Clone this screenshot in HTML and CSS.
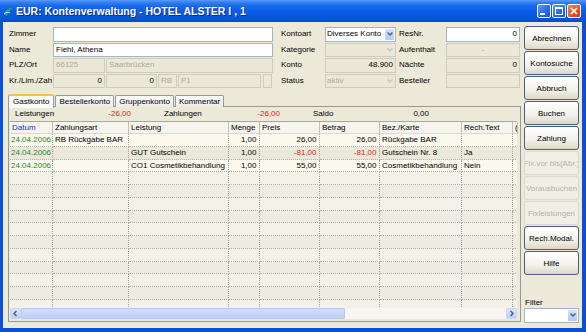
FILE: index.html
```html
<!DOCTYPE html>
<html lang="de">
<head>
  <meta charset="UTF-8" />
  <title>Kontenverwaltung</title>
  <link rel="stylesheet" href="styles.css">
</head>
<body>
<div class="window">
  <div class="titlebar">
    <svg class="app-icon" width="11" height="11" viewBox="0 0 11 11">
      <path d="M1 8 C3 3, 6 2, 10 2 C7 4, 5 6, 4 10 Z" fill="#2fa36b"/>
      <path d="M1 8 C3 6, 5 6, 7 7" stroke="#cdeffd" stroke-width="1" fill="none"/>
    </svg>
    <span class="title">EUR: Kontenverwaltung - HOTEL ALSTER I , 1</span>
    <div class="caption-btns">
      <span class="cap"><svg width="14" height="14" viewBox="0 0 14 14"><rect x="3" y="9" width="5" height="2" fill="#fff"/></svg></span>
      <span class="cap"><svg width="14" height="14" viewBox="0 0 14 14"><rect x="3.5" y="3.5" width="7" height="7" fill="none" stroke="#fff"/><rect x="3" y="3" width="8" height="2" fill="#fff"/></svg></span>
      <span class="cap cap-close"><svg width="14" height="14" viewBox="0 0 14 14"><path d="M4 4 L10 10 M10 4 L4 10" stroke="#fff" stroke-width="1.6"/></svg></span>
    </div>
  </div>

  <div class="client">
    <div class="main">
      <div class="form">
        <span class="lbl">Zimmer</span>
        <div class="fld"></div>
        <span class="lbl lbl-mid">Kontoart</span>
        <div class="fld combo">
          <span class="combo-text">Diverses Konto</span>
          <span class="combo-btn"><svg width="8" height="8" viewBox="0 0 8 8"><path d="M1.5 2.5 L4 5 L6.5 2.5" fill="none" stroke="#4d6185" stroke-width="1.5"/></svg></span>
        </div>
        <span class="lbl lbl-right">ResNr.</span>
        <div class="fld num">0</div>

        <span class="lbl">Name</span>
        <div class="fld">Fiehl, Athena</div>
        <span class="lbl lbl-mid">Kategorie</span>
        <div class="fld combo off">
          <span class="combo-text"></span>
          <span class="combo-btn"><svg width="8" height="8" viewBox="0 0 8 8"><path d="M1.5 2.5 L4 5 L6.5 2.5" fill="none" stroke="#c9c7ba" stroke-width="1.5"/></svg></span>
        </div>
        <span class="lbl lbl-right">Aufenthalt</span>
        <div class="fld off center">-</div>

        <span class="lbl">PLZ/Ort</span>
        <div class="split">
          <div class="fld off w52">66125</div>
          <div class="fld off grow">Saarbrücken</div>
        </div>
        <span class="lbl lbl-mid">Konto</span>
        <div class="fld ro num">48.900</div>
        <span class="lbl lbl-right">Nächte</span>
        <div class="fld ro num">0</div>

        <span class="lbl">Kr./Lim./Zah</span>
        <div class="split">
          <div class="fld ro num w52">0</div>
          <div class="fld ro num w51">0</div>
          <div class="fld off w19">RB</div>
          <div class="fld off w83">P1</div>
          <div class="fld ro tick"></div>
        </div>
        <span class="lbl lbl-mid">Status</span>
        <div class="fld combo off">
          <span class="combo-text">aktiv</span>
          <span class="combo-btn"><svg width="8" height="8" viewBox="0 0 8 8"><path d="M1.5 2.5 L4 5 L6.5 2.5" fill="none" stroke="#c9c7ba" stroke-width="1.5"/></svg></span>
        </div>
        <span class="lbl lbl-right">Besteller</span>
        <div class="fld ro"></div>
      </div>

      <div class="tabs">
        <span class="tab active">Gastkonto</span>
        <span class="tab">Bestellerkonto</span>
        <span class="tab">Gruppenkonto</span>
        <span class="tab">Kommentar</span>
      </div>

      <div class="panel">
        <div class="summary">
          <div class="sum-group"><span>Leistungen</span><span class="sum-val neg">-26,00</span></div>
          <div class="sum-group"><span>Zahlungen</span><span class="sum-val neg">-26,00</span></div>
          <div class="sum-group"><span>Saldo</span><span class="sum-val">0,00</span></div>
        </div>

        <div class="grid">
          <div class="row head">
            <span class="c date-head">Datum</span>
            <span class="c">Zahlungsart</span>
            <span class="c">Leistung</span>
            <span class="c">Menge</span>
            <span class="c">Preis</span>
            <span class="c">Betrag</span>
            <span class="c">Bez./Karte</span>
            <span class="c">Rech.Text</span>
            <span class="c">(</span>
          </div>
          <div class="tbody">
            <div class="row light">
              <span class="c date">24.04.2006</span>
              <span class="c">RB Rückgabe BAR</span>
              <span class="c"></span>
              <span class="c r">1,00</span>
              <span class="c r">26,00</span>
              <span class="c r">26,00</span>
              <span class="c">Rückgabe BAR</span>
              <span class="c"></span>
              <span class="c"></span>
            </div>
            <div class="row dark">
              <span class="c date">24.04.2006</span>
              <span class="c"></span>
              <span class="c">GUT Gutschein</span>
              <span class="c r">1,00</span>
              <span class="c r neg">-81,00</span>
              <span class="c r neg">-81,00</span>
              <span class="c">Gutschein Nr. 8</span>
              <span class="c">Ja</span>
              <span class="c"></span>
            </div>
            <div class="row light">
              <span class="c date">24.04.2006</span>
              <span class="c"></span>
              <span class="c">CO1 Cosmetikbehandlung</span>
              <span class="c r">1,00</span>
              <span class="c r">55,00</span>
              <span class="c r">55,00</span>
              <span class="c">Cosmetikbehandlung</span>
              <span class="c">Nein</span>
              <span class="c"></span>
            </div>
            <div class="row empty"><span class="c"></span><span class="c"></span><span class="c"></span><span class="c"></span><span class="c"></span><span class="c"></span><span class="c"></span><span class="c"></span><span class="c"></span></div>
            <div class="row empty alt"><span class="c"></span><span class="c"></span><span class="c"></span><span class="c"></span><span class="c"></span><span class="c"></span><span class="c"></span><span class="c"></span><span class="c"></span></div>
            <div class="row empty"><span class="c"></span><span class="c"></span><span class="c"></span><span class="c"></span><span class="c"></span><span class="c"></span><span class="c"></span><span class="c"></span><span class="c"></span></div>
            <div class="row empty alt"><span class="c"></span><span class="c"></span><span class="c"></span><span class="c"></span><span class="c"></span><span class="c"></span><span class="c"></span><span class="c"></span><span class="c"></span></div>
            <div class="row empty"><span class="c"></span><span class="c"></span><span class="c"></span><span class="c"></span><span class="c"></span><span class="c"></span><span class="c"></span><span class="c"></span><span class="c"></span></div>
            <div class="row empty alt"><span class="c"></span><span class="c"></span><span class="c"></span><span class="c"></span><span class="c"></span><span class="c"></span><span class="c"></span><span class="c"></span><span class="c"></span></div>
            <div class="row empty"><span class="c"></span><span class="c"></span><span class="c"></span><span class="c"></span><span class="c"></span><span class="c"></span><span class="c"></span><span class="c"></span><span class="c"></span></div>
            <div class="row empty alt"><span class="c"></span><span class="c"></span><span class="c"></span><span class="c"></span><span class="c"></span><span class="c"></span><span class="c"></span><span class="c"></span><span class="c"></span></div>
            <div class="row empty"><span class="c"></span><span class="c"></span><span class="c"></span><span class="c"></span><span class="c"></span><span class="c"></span><span class="c"></span><span class="c"></span><span class="c"></span></div>
            <div class="row empty alt"><span class="c"></span><span class="c"></span><span class="c"></span><span class="c"></span><span class="c"></span><span class="c"></span><span class="c"></span><span class="c"></span><span class="c"></span></div>
            <div class="row empty"><span class="c"></span><span class="c"></span><span class="c"></span><span class="c"></span><span class="c"></span><span class="c"></span><span class="c"></span><span class="c"></span><span class="c"></span></div>
          </div>
          <div class="hscroll">
            <span class="sb-btn"><svg width="11" height="11" viewBox="0 0 11 11"><path d="M6.5 3 L4 5.5 L6.5 8" fill="none" stroke="#4d6185" stroke-width="1.5"/></svg></span>
            <span class="sb-thumb"></span>
            <span class="sb-track"></span>
            <span class="sb-btn"><svg width="11" height="11" viewBox="0 0 11 11"><path d="M4.5 3 L7 5.5 L4.5 8" fill="none" stroke="#4d6185" stroke-width="1.5"/></svg></span>
          </div>
        </div>
      </div>
    </div>

    <div class="side">
      <button class="btn">Abrechnen</button>
      <button class="btn">Kontosuche</button>
      <button class="btn">Abbruch</button>
      <button class="btn">Buchen</button>
      <button class="btn">Zahlung</button>
      <button class="btn" disabled><span>Fix.vor bis(Abr.)</span></button>
      <button class="btn" disabled><span>Vorausbuchen</span></button>
      <button class="btn" disabled><span>Fixleistungen</span></button>
      <button class="btn">Rech.Modal.</button>
      <button class="btn">Hilfe</button>
      <div class="filter">
        <span class="filter-lbl">Filter</span>
        <div class="fld combo">
          <span class="combo-text"></span>
          <span class="combo-btn"><svg width="8" height="8" viewBox="0 0 8 8"><path d="M1.5 2.5 L4 5 L6.5 2.5" fill="none" stroke="#4d6185" stroke-width="1.5"/></svg></span>
        </div>
      </div>
    </div>
  </div>
</div>
</body>
</html>
```

FILE: styles.css
```css
* {
  box-sizing: border-box;
}

body {
  margin: 0;
  font-family: 'Liberation Sans', Arial, sans-serif;
  font-size: 8px;
  color: #000;
  background: #fff;
}

/* window frame */
.window {
  width: 586px;
  height: 332px;
  display: flex;
  flex-direction: column;
  background: #0a4fd8;
}

.titlebar {
  height: 22px;
  flex: none;
  display: flex;
  align-items: center;
  padding: 0 5px 0 3px;
  background: linear-gradient(#5a9cfa 0, #3a82f4 2px, #1668ec 6px, #0a5ce6 12px, #0556de 18px, #0a48c4 22px);
}

.app-icon {
  flex: none;
  margin-right: 2px;
}

.title {
  flex: 1;
  color: #fff;
  font-weight: bold;
  font-size: 10.5px;
  text-shadow: 1px 1px 0 #0a2a8a;
  white-space: nowrap;
}

.caption-btns {
  display: flex;
  gap: 1px;
}

.cap {
  width: 14px;
  height: 14px;
  border: 1px solid #fff;
  border-radius: 2px;
  background: linear-gradient(135deg, #5a9bfb, #2a68e8 60%, #1d55d4);
  display: flex;
}

.cap svg {
  margin: -1px;
}

.cap-close {
  background: linear-gradient(135deg, #f08a60, #e0532a 60%, #c83c18);
}

/* client area */
.client {
  flex: 1;
  display: flex;
  gap: 3px;
  margin: 0 4px 4px 3px;
  padding: 4px 3px 5px 5px;
  background: #ece9d8;
}

.main {
  width: 513px;
  display: flex;
  flex-direction: column;
}

/* top form */
.form {
  margin-top: 1px;
  display: grid;
  grid-template-columns: 45px 220px 52px 71px 50px 74px;
  grid-auto-rows: 14.5px;
  row-gap: 1px;
}

.lbl {
  padding-left: 1px;
  line-height: 14.5px;
  white-space: nowrap;
  overflow: hidden;
}

.lbl-mid {
  padding-left: 8px;
}

.lbl-right {
  padding-left: 3px;
}

.fld {
  height: 14.5px;
  border: 1px solid #a3b3c8;
  background: #fff;
  padding: 0 2px;
  line-height: 12.5px;
  white-space: nowrap;
  overflow: hidden;
}

.fld.num {
  text-align: right;
}

.fld.center {
  text-align: center;
}

.fld.off {
  background: #ebe8d8;
  border-color: #cfccbd;
  color: #aca899;
}

.fld.ro {
  background: #ebe8d8;
  border-color: #cfccbd;
}

.split {
  display: flex;
  gap: 1px;
}

.w52 { width: 52px; }
.w51 { width: 51px; }
.w19 { width: 19px; }
.w83 { width: 83px; }
.grow { flex: 1; }

.tick {
  width: 9px;
  margin-left: 1px;
}

.combo {
  display: flex;
  padding: 0 1px 0 1px;
}

.combo-text {
  flex: 1;
  overflow: hidden;
}

.combo-btn {
  width: 9px;
  height: 11px;
  margin-top: 0.5px;
  border-radius: 1px;
  background: linear-gradient(#d6e2fd, #b3c8f7);
  display: flex;
  align-items: center;
  justify-content: center;
}

.combo.off .combo-btn {
  background: none;
}

/* tabs */
.tabs {
  margin-top: 5px;
  height: 14px;
  display: flex;
  align-items: flex-end;
  position: relative;
  z-index: 1;
}

.tab {
  height: 12px;
  padding: 0 3px;
  margin-right: 1px;
  border: 1px solid #919b9c;
  border-bottom: none;
  border-radius: 2px 2px 0 0;
  background: linear-gradient(#fefefe, #ecebe6);
  line-height: 11px;
}

.tab.active {
  height: 14px;
  padding: 0 4px;
  border-top: 2px solid #f7c24a;
  background: #fbfbf9;
  line-height: 12px;
  margin-bottom: -1px;
}

.panel {
  height: 216px;
  margin-top: -1px;
  border: 1px solid #919b9c;
  padding: 0 3px 2px 1px;
  background: #ece9d8;
}

.summary {
  height: 14px;
  display: flex;
}

.sum-group {
  width: 149px;
  padding-left: 5px;
  display: grid;
  grid-template-columns: 50px 66px;
  line-height: 14px;
}

.sum-val {
  text-align: right;
}

.neg {
  color: #e8191e;
}

/* grid */
.grid {
  width: 507px;
}

.row {
  display: grid;
  grid-template-columns: 43px 76px 100px 31px 60px 60px 82px 51px 4px;
  height: 12.75px;
}

.c {
  padding: 0 2px;
  line-height: 12px;
  white-space: nowrap;
  overflow: hidden;
  border-right: 1px dotted #a8a69c;
  border-bottom: 1px dotted #b5b3a8;
}

.c.r {
  text-align: right;
  padding-right: 2.5px;
}

.row.head {
  height: 13px;
  background: #f5f4ef;
  border-top: 1px solid #a9a79c;
}

.row.head .c {
  border-right: 1px solid #c3c0b4;
  border-bottom: 1px solid #dcd9cd;
}

.date-head {
  color: #2828c8;
}

.c.date {
  color: #1f8a2a;
  padding-left: 1px;
  padding-right: 0;
}

.tbody {
  height: 174px;
  overflow: hidden;
}

.row.light {
  background: #fbf9ee;
}

.row.dark {
  background: #ebe8da;
}

.row.empty {
  background: #f3f1e8;
}

.row.empty.alt {
  background: #eeece2;
}

/* horizontal scrollbar */
.hscroll {
  height: 11px;
  display: flex;
  background: #f7f6f1;
}

.sb-btn {
  width: 11px;
  background: linear-gradient(#dbe6fd, #bccff8);
  border: 1px solid #c9d6f6;
  border-radius: 1px;
  display: flex;
}

.sb-btn svg {
  margin: -1px;
}

.sb-thumb {
  width: 324px;
  background: linear-gradient(#d2defc, #bfd0f8);
  border: 1px solid #b6c8f3;
  border-radius: 1px;
}

.sb-track {
  flex: 1;
}

/* side buttons */
.side {
  width: 55px;
  display: flex;
  flex-direction: column;
}

.btn {
  height: 24px;
  margin: 0 0 1px;
  padding: 0;
  border: 1px solid #4a5f7e;
  border-radius: 3px;
  background: linear-gradient(#ffffff, #f2f1ea 60%, #dcd8c8);
  font-family: inherit;
  font-size: 8px;
  color: #000;
  display: flex;
  align-items: center;
  justify-content: center;
  overflow: hidden;
  white-space: nowrap;
}

.btn:disabled {
  border-color: #dcd9cb;
  background: #f1efe5;
  color: #b5b2a3;
}

.filter {
  margin-top: auto;
  display: flex;
  flex-direction: column;
}

.filter-lbl {
  line-height: 11px;
  padding-left: 1px;
}

.filter .fld {
  height: 15px;
}
```
